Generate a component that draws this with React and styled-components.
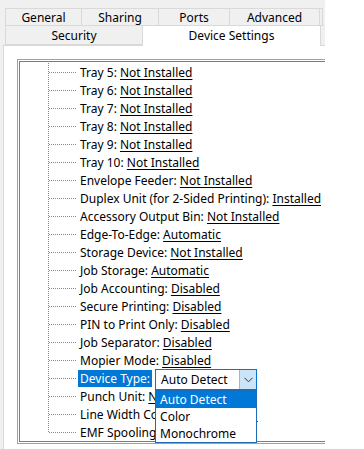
import React from "react";
import styled, { createGlobalStyle } from "styled-components";

const GlobalStyle = createGlobalStyle`
  html, body {
    margin: 0;
    padding: 0;
    background: #ffffff;
  }
  body {
    font-family: "Noto Sans", "Liberation Sans", sans-serif;
    font-size: 12px;
    color: #000;
  }
`;

// 탭 정보 (폭은 스크린샷 기준)
const topTabs = [
  { label: "General", width: 77 },
  { label: "Sharing", width: 78 },
  { label: "Ports", width: 72 },
  { label: "Advanced", width: 91 },
  { label: "", width: 4 },
];
const bottomTabs = [
  { label: "Security", width: 138 },
  { label: "Device Settings", width: 179, selected: true },
];

const rows = [
  { name: "Tray 5", value: "Not Installed" },
  { name: "Tray 6", value: "Not Installed" },
  { name: "Tray 7", value: "Not Installed" },
  { name: "Tray 8", value: "Not Installed" },
  { name: "Tray 9", value: "Not Installed" },
  { name: "Tray 10", value: "Not Installed" },
  { name: "Envelope Feeder", value: "Not Installed" },
  { name: "Duplex Unit (for 2-Sided Printing)", value: "Installed" },
  { name: "Accessory Output Bin", value: "Not Installed" },
  { name: "Edge-To-Edge", value: "Automatic" },
  { name: "Storage Device", value: "Not Installed" },
  { name: "Job Storage", value: "Automatic" },
  { name: "Job Accounting", value: "Disabled" },
  { name: "Secure Printing", value: "Disabled" },
  { name: "PIN to Print Only", value: "Disabled" },
  { name: "Job Separator", value: "Disabled" },
  { name: "Mopier Mode", value: "Disabled" },
  { name: "Device Type", combo: true },
  { name: "Punch Unit", value: "Not Installed" },
  { name: "Line Width Correction", value: "Disabled" },
  { name: "EMF Spooling", value: "Enabled" },
];

const options = ["Auto Detect", "Color", "Monochrome"];

function App() {
  return (
    <>
      <GlobalStyle />
      <Window>
        <TabStrip>
          <TabRow>
            {topTabs.map((t, i) => (
              <Tab key={i} $width={t.width}>
                {t.label}
              </Tab>
            ))}
          </TabRow>
          <TabRow>
            {bottomTabs.map((t, i) => (
              <Tab key={i} $width={t.width} $tall $selected={t.selected}>
                {t.label}
              </Tab>
            ))}
            <TabEdge />
          </TabRow>
        </TabStrip>
        <Panel>
          <TreeBox>
            <TreeList>
              {rows.map((r, i) => (
                <Row key={r.name}>
                  <Connector $last={i === rows.length - 1} />
                  {r.combo ? (
                    <>
                      <Label $active>{r.name}:</Label>
                      <Combo>
                        <ComboText>Auto Detect</ComboText>
                        <ComboButton>
                          <svg width="9" height="6" viewBox="0 0 9 6">
                            <path
                              d="M0.5 0.8 L4.5 4.8 L8.5 0.8"
                              fill="none"
                              stroke="#333"
                              strokeWidth="1"
                            />
                          </svg>
                        </ComboButton>
                        <DropList>
                          {options.map((o, k) => (
                            <DropItem key={o} $active={k === 0}>
                              {o}
                            </DropItem>
                          ))}
                        </DropList>
                      </Combo>
                    </>
                  ) : (
                    <Label>
                      {r.name}: <Value>{r.value}</Value>
                    </Label>
                  )}
                </Row>
              ))}
            </TreeList>
          </TreeBox>
        </Panel>
      </Window>
    </>
  );
}

const Window = styled.div`
  width: 325px;
  height: 449px;
  overflow: hidden;
  background: #f0f0f0;
  display: flex;
  flex-direction: column;
`;

const TabStrip = styled.div`
  margin: 9px 0 0 5px;
  display: flex;
  flex-direction: column;
`;

const TabRow = styled.div`
  display: flex;
`;

const Tab = styled.div`
  box-sizing: border-box;
  width: ${(p) => p.$width}px;
  height: ${(p) => (p.$selected ? 21 : p.$tall ? 20 : 18)}px;
  margin-left: -1px;
  margin-top: -1px;
  margin-bottom: ${(p) => (p.$selected ? "-1px" : "0")};
  padding-top: ${(p) => (p.$selected ? "0" : "2px")};
  border: 1px solid #d9d9d9;
  border-bottom: ${(p) => (p.$selected ? "none" : "1px solid #d9d9d9")};
  background: ${(p) => (p.$selected ? "#ffffff" : "#f0f0f0")};
  display: flex;
  align-items: center;
  justify-content: center;
  line-height: 16px;
  white-space: nowrap;
  position: relative;
  z-index: ${(p) => (p.$selected ? 1 : 0)};
  &:first-child {
    margin-left: 0;
  }
`;

const TabEdge = styled.div`
  width: 3px;
  margin-top: -1px;
  border-top: 1px solid #d9d9d9;
  background: #f0f0f0;
`;

const Panel = styled.div`
  flex: 1;
  margin-left: 3px;
  background: #ffffff;
  border-left: 1px solid #d9d9d9;
  border-top: 1px solid #d9d9d9;
  padding: 13px 0 0 13px;
`;

const TreeBox = styled.div`
  box-sizing: border-box;
  width: 340px;
  height: 385px;
  border: 1px solid #a0a0a0;
  box-shadow: inset 0 0 0 1px #ffffff, inset 0 0 0 2px #7c7c7c;
  padding: 3px 0 0 30px;
`;

const TreeList = styled.div`
  display: flex;
  flex-direction: column;
`;

const Row = styled.div`
  height: 18px;
  display: flex;
  align-items: flex-start;
  white-space: nowrap;
  position: relative;
`;

const Connector = styled.span`
  position: relative;
  flex: none;
  width: 28px;
  height: 18px;
  margin-right: 2px;
  background-image: linear-gradient(to right, #8a8a8a 50%, transparent 50%);
  background-size: 2px 1px;
  background-repeat: repeat-x;
  background-position: 1px 9px;
  &::before {
    content: "";
    position: absolute;
    left: 0;
    top: 0;
    width: 1px;
    height: ${(p) => (p.$last ? "10px" : "18px")};
    background-image: linear-gradient(to bottom, #8a8a8a 50%, transparent 50%);
    background-size: 1px 2px;
  }
`;

const Label = styled.span`
  margin-top: 1px;
  height: 17px;
  line-height: 17px;
  padding: 0 2px;
  background: ${(p) => (p.$active ? "#0078d7" : "transparent")};
  color: ${(p) => (p.$active ? "#ffffff" : "#000000")};
`;

const Value = styled.span`
  text-decoration: underline;
  text-underline-offset: 2px;
`;

const Combo = styled.div`
  box-sizing: border-box;
  position: relative;
  margin-left: 3px;
  width: 102px;
  height: 21px;
  border: 1px solid #0078d7;
  background: #ffffff;
  display: flex;
  align-items: stretch;
  z-index: 2;
`;

const ComboText = styled.span`
  flex: 1;
  padding-left: 5px;
  line-height: 19px;
`;

const ComboButton = styled.span`
  width: 16px;
  background: #cce4f7;
  border-left: 1px solid #8dbbe4;
  display: flex;
  align-items: center;
  justify-content: center;
`;

const DropList = styled.div`
  box-sizing: border-box;
  position: absolute;
  top: 20px;
  left: -1px;
  width: 102px;
  border: 1px solid #1f6cb5;
  background: #ffffff;
  display: flex;
  flex-direction: column;
`;

const DropItem = styled.div`
  height: 17px;
  line-height: 17px;
  padding-left: 4px;
  background: ${(p) => (p.$active ? "#0078d7" : "#ffffff")};
  color: ${(p) => (p.$active ? "#ffffff" : "#000000")};
`;

export default App;
